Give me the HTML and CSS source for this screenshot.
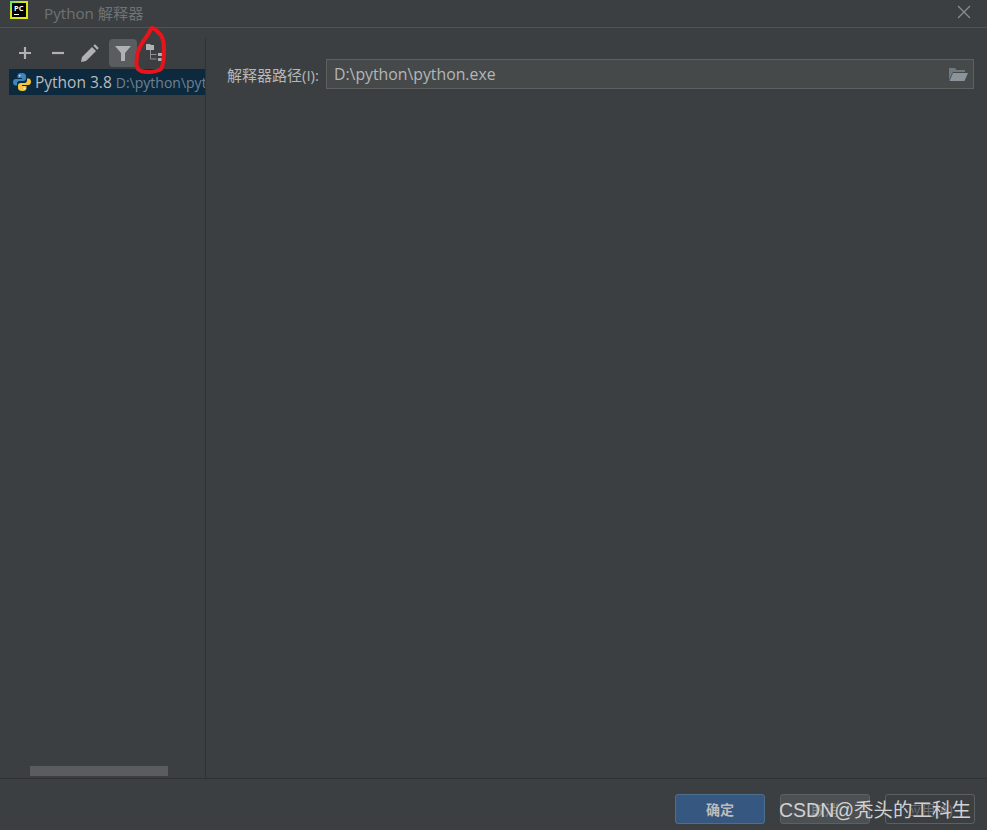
FILE: index.html
```html
<!DOCTYPE html>
<html>
<head>
  <meta charset="UTF-8">
  <title>Python 解释器</title>
  <link rel="stylesheet" href="styles.css">
</head>
<body>
  <div class="dialog">
    <div class="titlebar">
      <div class="logo"><span class="logo-inner">PC<i></i></span></div>
      <span class="title">Python 解释器</span>
      <svg class="close" width="16" height="16" viewBox="0 0 16 16"><path d="M2 2l12 12M14 2L2 14" stroke="#8a8c8e" stroke-width="1.3" fill="none"/></svg>
    </div>

    <div class="main">
      <div class="side">
        <div class="toolbar">
          <span class="tool">
            <svg width="16" height="16" viewBox="0 0 16 16"><path d="M8 2v12M2 8h12" stroke="#afb1b3" stroke-width="2.2" fill="none"/></svg>
          </span>
          <span class="tool">
            <svg width="16" height="16" viewBox="0 0 16 16"><path d="M2 8h12" stroke="#afb1b3" stroke-width="2.2" fill="none"/></svg>
          </span>
          <span class="tool">
            <svg width="20" height="20" viewBox="0 0 20 20"><path d="M1 19l1-5L12 4l4 4L6 18zM13.300 2.700l1.700-1.500 3.800 3.800-1.500 1.700z" fill="#afb1b3"/></svg>
          </span>
          <span class="tool active">
            <svg width="18" height="18" viewBox="0 0 18 18"><path d="M1 2h16l-6 7v8H7V9z" fill="#afb1b3"/></svg>
          </span>
          <span class="tool">
            <svg width="20" height="20" viewBox="0 0 20 20"><path d="M1 1h4l1 1h3v5H1z" fill="#afb1b3"/><path d="M5.500 7v9h6M5.500 11.500h6" stroke="#8f9193" stroke-width="1" fill="none"/><path d="M13 10h4v3h-4zM13 15h4v3h-4z" fill="#afb1b3"/></svg>
          </span>
        </div>
        <div class="env-list">
          <div class="env selected">
            <svg class="py" width="18" height="18" viewBox="0 0 18 18">
              <path d="M9 0C5 0 4.500 1.500 4.500 3v2H9v1H2.500C1 6 0 7.500 0 9.200s1 3.300 2.500 3.300H4V10.500C4 9 5 8 6.500 8h4C12 8 13 7 13 5.500V3C13 1.500 12 0 9 0z" fill="#3f84bd"/>
              <path d="M9 18c4 0 4.500-1.500 4.500-3v-2H9v-1h6.500c1.500 0 2.500-1.500 2.500-3.200s-1-3.300-2.500-3.300H14v2c0 1.500-1 2.500-2.500 2.500h-4C6 10 5 11 5 12.500V15c0 1.500 1 3 4 3z" fill="#f2c53d"/>
              <circle cx="6.700" cy="2.600" r=".9" fill="#dfe6ec"/>
              <circle cx="11.300" cy="15.400" r=".9" fill="#fff6d5"/>
            </svg>
            <span class="env-name">Python 3.8</span>
            <span class="env-path">D:\python\python.exe</span>
          </div>
        </div>
        <div class="hscroll"><div class="hthumb"></div></div>
      </div>

      <div class="content">
        <div class="field">
          <label class="field-label">解释器路径(I):</label>
          <div class="path-input">
            <span>D:\python\python.exe</span>
            <svg width="20" height="16" viewBox="0 0 20 16"><path d="M1 14V2h6l1.500 2H17v2H5z" fill="#6e7a80"/><path d="M5 7h15l-3.500 8H1.500z" fill="#8a9499"/></svg>
          </div>
        </div>
      </div>
    </div>

    <div class="footer">
      <button class="btn primary">确定</button>
      <button class="btn">取消</button>
      <button class="btn muted">应用(A)</button>
    </div>
  </div>

  <svg class="scribble" width="40" height="52" viewBox="0 0 40 52"><path d="M21 3C22 1 25 3 28 6 32 9 34 15 34 23 34 31 34 38 31 43 27 46 17 47 11 45 6 43 6 38 7 30 8 22 13 15 17 10 19 7 20 5 21 3z" fill="none" stroke="#e8141b" stroke-width="4" stroke-linejoin="round"/></svg>
  <div class="watermark">CSDN@秃头的工科生</div>
</body>
</html>
```

FILE: styles.css
```css
* {
  box-sizing: border-box;
}

html, body {
  margin: 0;
  height: 100%;
  overflow: hidden;
}

body {
  position: relative;
  font-family: "Open Sans", "Noto Sans CJK SC", sans-serif;
  background: #3c3f41;
  color: #bbbbbb;
}

.dialog {
  display: flex;
  flex-direction: column;
  height: 830px;
}

.titlebar {
  display: flex;
  align-items: center;
  height: 28px;
  padding: 0 15px 4px 10px;
  border-bottom: 1px solid #515354;
}

.logo {
  width: 18px;
  height: 18px;
  margin-top: -4px;
  padding: 2px;
  background: linear-gradient(135deg, #4fe08a, #d4e61a 35%, #e6e81a);
}

.logo-inner {
  display: block;
  position: relative;
  height: 14px;
  background: #000;
  color: #fff;
  font-size: 7.500px;
  font-weight: 700;
  line-height: 10px;
  padding-left: 2px;
}

.logo-inner i {
  position: absolute;
  left: 2px;
  bottom: 2px;
  width: 5px;
  height: 1px;
  background: #fff;
}

.title {
  margin-left: 16px;
  font-size: 15.200px;
  color: #6f7274;
}

.close {
  margin-left: auto;
}

.main {
  flex: 1;
  display: flex;
  min-height: 0;
  border-bottom: 1px solid #2f3132;
}

.side {
  display: flex;
  flex-direction: column;
  width: 206px;
  margin-top: 10px;
  border-right: 1px solid #2f3132;
}

.toolbar {
  display: flex;
  align-items: center;
  height: 31px;
  margin-top: -1px;
  margin-bottom: 1px;
  padding-left: 11px;
  gap: 4.500px;
}

.tool {
  display: flex;
  align-items: center;
  justify-content: center;
  width: 28px;
  height: 28px;
}

.tool.active {
  background: #5a5d5f;
  border-radius: 4px;
}

.env-list {
  flex: 1;
  padding-left: 9px;
}

.env {
  display: flex;
  align-items: center;
  height: 26px;
  overflow: hidden;
  white-space: nowrap;
}

.env.selected {
  background: #0d293e;
}

.py {
  flex: none;
  margin-left: 4px;
}

.env-name {
  margin-left: 4px;
  font-size: 15.500px;
  color: #bbbbbb;
}

.env-path {
  margin-left: 4px;
  font-size: 14px;
  color: #6f8190;
}

.hscroll {
  height: 12px;
  padding-left: 30px;
}

.hthumb {
  width: 138px;
  height: 10px;
  background: #5a5c5e;
}

.content {
  flex: 1;
  padding: 31px 13px 0 21px;
}

.field {
  display: flex;
  align-items: center;
  gap: 7px;
}

.field-label {
  font-size: 15px;
  white-space: nowrap;
  color: #b5b7b9;
}

.path-input {
  flex: 1;
  display: flex;
  align-items: center;
  justify-content: space-between;
  height: 30px;
  padding: 0 5px 0 7px;
  font-size: 15.800px;
  background: #45494a;
  border: 1px solid #5e6060;
  color: #b4b6b8;
}

.footer {
  display: flex;
  justify-content: flex-end;
  align-items: flex-start;
  gap: 15px;
  height: 51px;
  padding: 15px 12px 0 0;
}

.btn {
  width: 90px;
  height: 30px;
  padding: 0;
  font-family: inherit;
  font-size: 14px;
  background: #4c5052;
  border: 1px solid #5e6060;
  border-radius: 3px;
  color: #85878a;
}

.btn.primary {
  background: #365880;
  border-color: #4c708c;
  color: #bbbbbb;
  font-weight: 700;
}

.btn.muted {
  background: #3c3f41;
  color: #6e7072;
}

/* hand drawn mark over the toolbar */
.scribble {
  position: absolute;
  left: 130px;
  top: 26px;
}

.watermark {
  position: absolute;
  left: 779px;
  top: 797px;
  font-family: "Liberation Sans", "Noto Sans CJK SC", sans-serif;
  font-size: 19.500px;
  line-height: 26px;
  white-space: nowrap;
  color: #d0d1d2;
}
```
